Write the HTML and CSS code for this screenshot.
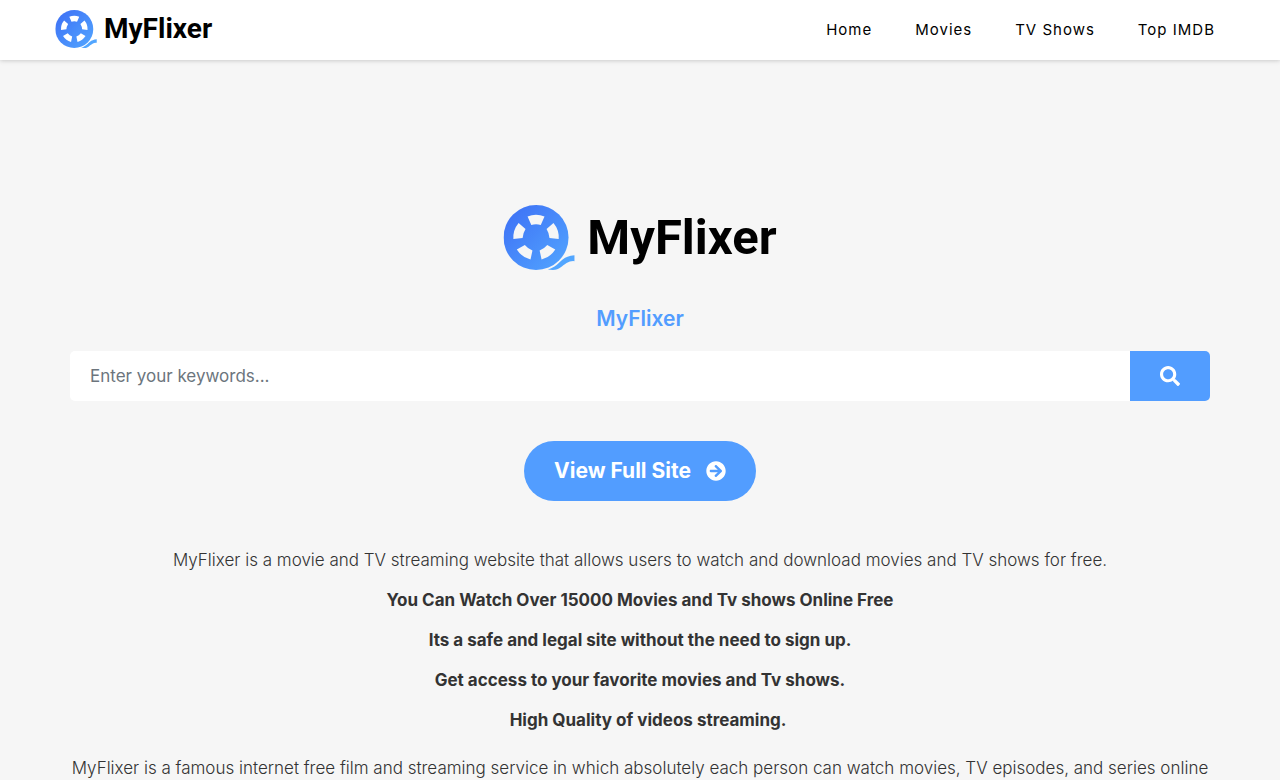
FILE: index.html
```
<!DOCTYPE html>
<html lang="en">
<head>
	<meta charset="UTF-8">
	<meta name="viewport" content="width=device-width, initial-scale=1.0">
	<title>MyFlixer</title>
	<link rel="stylesheet" href="styles.css">
</head>
<body>
	<svg class="sprite" aria-hidden="true">
		<defs>
			<linearGradient id="blue" x1="0" y1="0" x2="66" y2="66" gradientUnits="userSpaceOnUse">
				<stop offset="0" stop-color="#3d6ef5"/>
				<stop offset="1" stop-color="#52a6ff"/>
			</linearGradient>
			<path id="hole" d="M-8.6 -21.4A23 23 0 0 1 8.6 -21.4L4.8 -12.800Q0 -14 -4.8 -12.800Z"/>
			<mask id="holes">
				<rect width="72" height="66" fill="#fff"/>
				<g transform="translate(33 33)" fill="#000">
					<use href="#hole"/>
					<use href="#hole" transform="rotate(72)"/>
					<use href="#hole" transform="rotate(144)"/>
					<use href="#hole" transform="rotate(216)"/>
					<use href="#hole" transform="rotate(288)"/>
				</g>
			</mask>
		</defs>
		<symbol id="reel" viewBox="0 0 72 66">
			<circle cx="33" cy="33" r="33" fill="url(#blue)" mask="url(#holes)"/>
			<path d="M45 65.5C55 63 58 54.500 65 52.500Q68 51.500 72 51V57Q68 56.500 64 59C59 62 57 66 50 66Z" fill="#52a6ff"/>
		</symbol>
	</svg>

	<header class="header">
		<div class="header-inner">
			<a href="#" class="logo">
				<svg class="logo-icon"><use href="#reel"/></svg>
				<span>MyFlixer</span>
			</a>
			<nav class="menu">
				<a href="#">Home</a>
				<a href="#">Movies</a>
				<a href="#">TV Shows</a>
				<a href="#">Top IMDB</a>
			</nav>
		</div>
	</header>

	<main class="container">
		<a href="#" class="logo logo-big">
			<svg class="logo-icon"><use href="#reel"/></svg>
			<span>MyFlixer</span>
		</a>
		<h1>MyFlixer</h1>
		<form class="search">
			<input type="text" name="keyword" placeholder="Enter your keywords..." aria-label="Enter your keywords">
			<button type="submit" aria-label="Search">
				<svg width="20" height="20" viewBox="0 0 512 512" fill="currentColor"><path d="M505 442.700L405.300 343c-4.500-4.500-10.600-7-17-7H372c27.600-35.300 44-79.700 44-128C416 93.100 322.900 0 208 0S0 93.100 0 208s93.100 208 208 208c48.300 0 92.700-16.400 128-44v16.300c0 6.400 2.500 12.500 7 17l99.700 99.700c9.400 9.400 24.600 9.400 33.900 0l28.300-28.300c9.400-9.400 9.400-24.600.1-34zM208 336c-70.700 0-128-57.200-128-128 0-70.700 57.200-128 128-128 70.700 0 128 57.200 128 128 0 70.700-57.200 128-128 128z"/></svg>
			</button>
		</form>
		<a href="#" class="full-site">
			View Full Site
			<svg width="20" height="20" viewBox="0 0 512 512" fill="currentColor"><path d="M256 8c137 0 248 111 248 248S393 504 256 504 8 393 8 256 119 8 256 8zm-28.900 143.600l75.500 72.400H120c-13.300 0-24 10.700-24 24v16c0 13.300 10.700 24 24 24h182.600l-75.500 72.400c-9.700 9.300-9.900 24.800-.4 34.300l11 10.900c9.400 9.400 24.600 9.400 33.900 0L404.300 273c9.400-9.400 9.400-24.600 0-33.900L271.600 106.300c-9.400-9.400-24.600-9.400-33.900 0l-11 10.900c-9.500 9.600-9.300 25.100.4 34.400z"/></svg>
		</a>
		<div class="text">
			<p>MyFlixer is a movie and TV streaming website that allows users to watch and download movies and TV shows for free.</p>
			<p><strong>You Can Watch Over 15000 Movies and Tv shows Online Free</strong></p>
			<p><strong>Its a safe and legal site without the need to sign up.</strong></p>
			<p><strong>Get access to your favorite movies and Tv shows.</strong></p>
			<p><strong>&nbsp;&nbsp;&nbsp;&nbsp;High Quality of videos streaming.</strong></p>
		</div>
		<p class="about">MyFlixer is a famous internet free film and streaming service in which absolutely each person can watch movies, TV episodes, and series online</p>
	</main>
</body>
</html>
```
FILE: styles.css
```
* {
	box-sizing: border-box;
}
body {
	margin: 0;
	background: #f6f6f6;
	color: #333;
	font-family: Inter, "Open Sans", sans-serif;
	font-size: 17px;
	line-height: 24px;
}
a {
	text-decoration: none;
}
.sprite {
	position: absolute;
	width: 0;
	height: 0;
}
.header {
	background: #fff;
	box-shadow: 0 0 5px rgba(0, 0, 0, 0.25);
}
.header-inner {
	max-width: 1170px;
	height: 60px;
	margin: 0 auto;
	padding: 0 10px 2px 0;
	display: flex;
	align-items: center;
	justify-content: space-between;
}
.logo {
	display: flex;
	align-items: center;
	gap: 7px;
	color: #000;
	font-family: Roboto, sans-serif;
	font-weight: 700;
	font-size: 28px;
	line-height: 40px;
}
.logo-icon {
	width: 42px;
	height: 38px;
}
.menu {
	display: flex;
	gap: 43px;
	padding-top: 2px;
}
.menu a {
	color: #000;
	font-size: 15px;
	font-weight: 400;
	letter-spacing: 1px;
}
.container {
	max-width: 1170px;
	margin: 0 auto;
	padding: 145px 15px 0;
	display: flex;
	flex-direction: column;
	align-items: center;
	text-align: center;
}
.logo-big {
	gap: 12px;
	font-size: 49px;
	line-height: 65px;
}
.logo-big .logo-icon {
	width: 72px;
	height: 65px;
}
h1 {
	margin: 37px 0 20px;
	color: #529dff;
	font-size: 21px;
	font-weight: 600;
	line-height: 24px;
}
.search {
	display: flex;
	width: 100%;
	height: 50px;
	border-radius: 5px;
	overflow: hidden;
}
.search input {
	flex: 1;
	min-width: 0;
	padding: 0 20px;
	border: none;
	background: #fff;
	font: inherit;
}
.search input::placeholder {
	color: #6c757d;
	opacity: 1;
}
.search button {
	width: 80px;
	display: flex;
	align-items: center;
	justify-content: center;
	border: none;
	background: #529dff;
	color: #fff;
	cursor: pointer;
}
.full-site {
	display: flex;
	align-items: center;
	gap: 15px;
	height: 60px;
	margin: 40px 0 47px;
	padding: 0 30px;
	border-radius: 30px;
	background: #529dff;
	color: #fff;
	font-size: 21px;
	font-weight: 700;
}
.text p {
	margin: 0 0 16px;
}
.text p,
.about {
	font-weight: 300;
}
.text strong {
	font-weight: 700;
}
.about {
	margin: 8px -10px 0;
}
```
